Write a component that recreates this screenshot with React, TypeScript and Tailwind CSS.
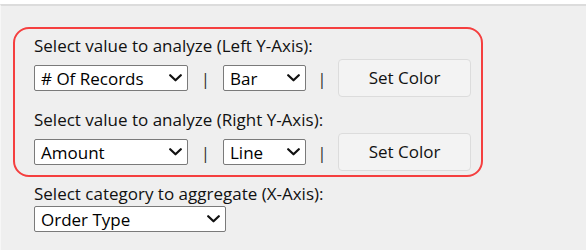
import React from "react";

function Chevron() {
  return (
    <svg width="13" height="8" viewBox="0 0 13 8" className="shrink-0">
      <path d="M1.2 1.2 L6.5 6.3 L11.8 1.2" fill="none" stroke="#111" strokeWidth="2.2" strokeLinecap="round" strokeLinejoin="round" />
    </svg>
  );
}

function Select({ value, width }: { value: string; width: string }) {
  return (
    <div className={`${width} h-[26px] flex items-center justify-between bg-white border border-[#7a7a7a] rounded-[2px] pl-[6px] pr-[5px] text-[17px] text-black`}>
      <span className="leading-none">{value}</span>
      <Chevron />
    </div>
  );
}

function Pipe({ w }: { w: string }) {
  return <span className={`${w} text-center text-[17px] text-[#333] leading-none`}>|</span>;
}

function Row({ a, b }: { a: string; b: string }) {
  return (
    <div className="flex items-center h-[38px]">
      <Select value={a} width="w-[154px]" />
      <Pipe w="w-[35px]" />
      <Select value={b} width="w-[83px]" />
      <Pipe w="w-[32px]" />
      <button className="w-[133px] h-[38px] bg-[#f3f3f3] border border-[#dcdcdc] rounded-[4px] text-[17px] text-[#111]">
        Set Color
      </button>
    </div>
  );
}

export default function App() {
  return (
    <div className="w-[586px] h-[251px] bg-white pt-[4px] pb-[1px]" style={{ fontFamily: '"Open Sans", "Noto Sans", sans-serif' }}>
      <div className="h-full bg-[#efefef] border-t-2 border-t-[#dcdcdc] border-l border-l-[#f7f7f7] pt-[21px] pl-[12px]">
        <div className="w-[470px] border-2 border-[#f53f3f] rounded-[16px] pl-[19px] pt-[6px] pb-[4px]">
          <div className="text-[17px] leading-[22px] text-[#111]">Select value to analyze (Left Y-Axis):</div>
          <div className="mt-[2px]">
            <Row a="# Of Records" b="Bar" />
          </div>
          <div className="mt-[12px] text-[17px] leading-[22px] text-[#111]">Select value to analyze (Right Y-Axis):</div>
          <div className="mt-[2px]">
            <Row a="Amount" b="Line" />
          </div>
        </div>
        <div className="pl-[21px] pt-[6px]">
          <div className="text-[17px] leading-[22px] text-[#111]">Select category to aggregate (X-Axis):</div>
          <div className="mt-[1px]">
            <Select value="Order Type" width="w-[192px]" />
          </div>
        </div>
      </div>
    </div>
  );
}
